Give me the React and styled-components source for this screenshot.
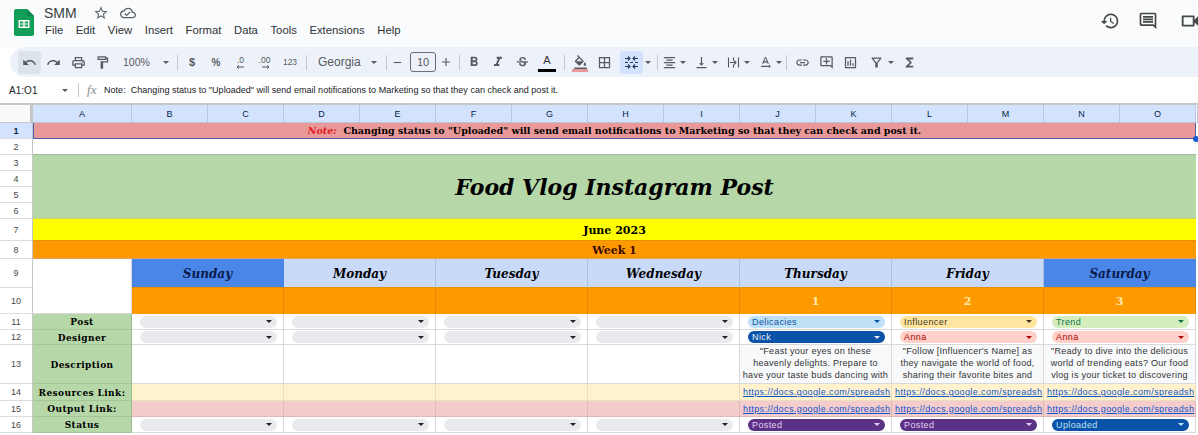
import React from "react";
import styled, { createGlobalStyle } from "styled-components";
import {
  MdAdd, MdBorderAll, MdFormatAlignCenter, MdFormatBold, MdFormatItalic, MdFunctions, MdHistory, MdLink,
  MdOutlineAddComment, MdOutlineCloudDone, MdOutlineComment, MdOutlineFilterAlt, MdOutlineFormatColorFill,
  MdOutlineFormatPaint, MdOutlineInsertChart, MdOutlinePrint, MdOutlineVideocam, MdRedo, MdRemove, MdStarBorder,
  MdStrikethroughS, MdTextRotationNone, MdUndo, MdVerticalAlignBottom,
} from "react-icons/md";

const GlobalStyle = createGlobalStyle`
  html, body { margin: 0; padding: 0; background: #fff; overflow: hidden; }
  body { font-family: "Liberation Sans", Arial, sans-serif; }
`;

const Page = styled.div`
  width: 1198px;
  height: 435px;
  overflow: hidden;
  display: flex;
  flex-direction: column;
  background: #fff;
  position: relative;
`;

const TitleBar = styled.div`
  height: 47px;
  background: #f9fbfd;
  display: flex;
  align-items: flex-start;
  flex-shrink: 0;
`;

const Logo = styled.svg`
  width: 20px;
  height: 27px;
  margin: 9px 0 0 14px;
`;

const TitleBlock = styled.div`
  margin-left: 10px;
  display: flex;
  flex-direction: column;
`;

const TitleLine = styled.div`
  display: flex;
  align-items: center;
  height: 24px;
  padding-top: 2px;
  box-sizing: border-box;
  color: #3c4043;
  font-size: 14px;
  svg { color: #5f6368; }
  svg + svg { margin-left: 11px; }
`;

const DocName = styled.span`
  width: 49px;
`;

const MenuLine = styled.div`
  display: flex;
  gap: 12.6px;
  font-size: 11.3px;
  color: #303336;
  padding-left: 1px;
`;

const TopIcons = styled.div`
  margin-left: auto;
  display: flex;
  align-items: center;
  gap: 18px;
  padding-top: 10px;
  margin-right: -3px;
  color: #444746;
  svg { flex-shrink: 0; }
  svg + svg + svg { margin-left: 3px; }
`;

const Toolbar = styled.div`
  height: 30px;
  margin-left: 10px;
  background: #edf2fa;
  border-radius: 15px 0 0 15px;
  display: flex;
  align-items: center;
  padding-left: 8px;
  color: #565a5e;
  font-size: 11px;
  flex-shrink: 0;
`;

const Tool = styled.div`
  width: ${(p) => p.$w || 24}px;
  height: 23px;
  flex-shrink: 0;
  display: flex;
  align-items: center;
  justify-content: ${(p) => (p.$pad ? "flex-start" : "center")};
  padding-left: ${(p) => p.$pad || 0}px;
  margin-left: ${(p) => p.$ml || 0}px;
  box-sizing: border-box;
  border-radius: 3px;
  background: ${(p) => p.$on || "transparent"};
  font-size: ${(p) => p.$fs || 11}px;
  font-weight: ${(p) => (p.$bold ? 700 : 400)};
  position: relative;
`;

const Sep = styled.div`
  width: 1px;
  height: 15px;
  background: #c7c7c7;
  margin: 0 ${(p) => p.$r || 0}px 0 ${(p) => p.$l || 0}px;
  flex-shrink: 0;
`;

const Caret = styled.span`
  width: 0;
  height: 0;
  flex-shrink: 0;
  border-left: 3px solid transparent;
  border-right: 3px solid transparent;
  border-top: 3px solid #565a5e;
  margin-left: ${(p) => p.$m || 0}px;
  margin-right: ${(p) => p.$mr || 0}px;
`;

const SizeBox = styled.div`
  width: 26px;
  height: 20px;
  border: 1px solid #6b6f73;
  border-radius: 3px;
  box-sizing: border-box;
  display: flex;
  align-items: center;
  justify-content: center;
  font-size: 11px;
  flex-shrink: 0;
`;

const ColorBar = styled.span`
  position: absolute;
  left: 4px;
  right: 4px;
  bottom: 2px;
  height: 3px;
  background: ${(p) => p.$c};
`;

const TextColor = styled.span`
  font-size: 11px;
  margin-top: -5px;
  color: #333;
`;

const Decimal = styled.div`
  display: flex;
  flex-direction: column;
  align-items: flex-end;
  font-size: 8.5px;
  line-height: 8px;
  svg { display: block; margin-top: 1px; }
`;

const FormulaBar = styled.div`
  height: 28px;
  box-sizing: border-box;
  display: flex;
  align-items: center;
  font-size: 9px;
  letter-spacing: 0.03px;
  white-space: pre;
  color: #202124;
  border-bottom: 2px solid #c4c7c5;
  flex-shrink: 0;
`;

const NameBox = styled.div`
  width: 53px;
  padding-left: 9px;
  font-size: 10px;
`;

const FormulaDivider = styled.div`
  width: 1px;
  height: 14px;
  background: #c4c7c5;
  margin: 0 8px 0 10px;
`;

const Fx = styled.span`
  font-family: "Liberation Serif", serif;
  font-style: italic;
  color: #8a8f94;
  font-size: 13px;
  width: 17px;
`;

const Sheet = styled.div`
  display: grid;
  grid-template-columns: 33px 99px repeat(14, 76px) 2px;
  grid-template-rows: 18px repeat(6, 16px) 22px 18px 29px 26px 16px 15px 39px 17px 16px 16px;
  width: 1198px;
  flex-shrink: 0;
  font-family: "DejaVu Serif", Georgia, serif;
  font-size: 9px;
  color: #000;
`;

const Corner = styled.div`
  background: #f8f9fa;
  border-right: 3px solid #c4c7c5;
  border-bottom: 1px solid #c4c7c5;
  box-sizing: border-box;
`;

const ColHead = styled.div`
  background: ${(p) => (p.$blank ? "#fff" : "#d3e3fd")};
  border-right: 1px solid #b9c7de;
  border-bottom: 1px solid #b9c7de;
  box-sizing: border-box;
  font-family: "Liberation Sans", sans-serif;
  font-size: 9px;
  color: #041e49;
  display: flex;
  align-items: center;
  justify-content: center;
`;

const RowHead = styled.div`
  grid-column: 1;
  grid-row: ${(p) => p.$r};
  border-right: 1px solid #c4c7c5;
  border-bottom: 1px solid #dadce0;
  box-sizing: border-box;
  font-family: "Liberation Sans", sans-serif;
  font-size: 9px;
  color: ${(p) => (p.$on ? "#041e49" : "#444746")};
  font-weight: ${(p) => (p.$on ? 700 : 400)};
  background: ${(p) => (p.$on ? "#d3e3fd" : "#fff")};
  display: flex;
  align-items: center;
  justify-content: center;
`;

const Banner = styled.div`
  grid-column: 2 / 17;
  grid-row: ${(p) => p.$row};
  background: ${(p) => p.$bg};
  color: ${(p) => p.$color || "#000"};
  font-size: ${(p) => p.$size}px;
  font-weight: 700;
  font-style: ${(p) => (p.$italic ? "italic" : "normal")};
  box-sizing: border-box;
  padding-top: 1px;
  border-bottom: 1px solid ${(p) => p.$line || "#d9d9d9"};
  display: flex;
  align-items: center;
  justify-content: center;
  white-space: pre;
`;

const SelectedBanner = styled(Banner)`
  border: 1px solid #4a5fb0;
  border-top: none;
  padding-top: 0;
`;

const NoteLabel = styled.span`
  color: #e01b1b;
  font-style: italic;
`;

const SelectionDot = styled.div`
  position: absolute;
  left: 1193px;
  top: 136px;
  width: 6px;
  height: 6px;
  border-radius: 50%;
  background: #1a5fd0;
`;

const DayHead = styled.div`
  grid-column: span 2;
  background: ${(p) => (p.$weekend ? "#4a86e8" : "#c9daf8")};
  border-right: 1px solid ${(p) => (p.$weekend ? "#4a86e8" : "#aebfdc")};
  border-bottom: 1px solid #e69100;
  box-sizing: border-box;
  padding-top: 1px;
  font-size: 12px;
  font-weight: 700;
  font-style: italic;
  display: flex;
  align-items: center;
  justify-content: center;
  color: ${(p) => (p.$weekend ? "#0b1a4a" : "#000")};
`;

const DateCell = styled.div`
  grid-column: span 2;
  background: #ff9900;
  border-right: 1px solid #e08a00;
  box-sizing: border-box;
  color: #ffe9a8;
  font-size: 11px;
  font-weight: 700;
  display: flex;
  align-items: center;
  justify-content: center;
`;

const Label = styled.div`
  grid-column: 2;
  background: #b6d7a8;
  border-bottom: 1px solid #a4c496;
  border-right: 1px solid #9dbd90;
  box-sizing: border-box;
  padding-top: 1px;
  font-size: 9px;
  font-weight: 700;
  letter-spacing: 0.4px;
  display: flex;
  align-items: center;
  justify-content: center;
  white-space: nowrap;
`;

const Cell = styled.div`
  grid-column: span 2;
  background: ${(p) => p.$bg || "#fff"};
  border-right: 1px solid ${(p) => p.$line || "#d9d9d9"};
  border-bottom: 1px solid ${(p) => p.$line || "#d9d9d9"};
  box-sizing: border-box;
  display: flex;
  align-items: center;
  overflow: hidden;
  min-width: 0;
`;

const ChipCell = styled(Cell)`
  padding-left: 8px;
`;

const Chip = styled.div`
  width: 137px;
  height: 12px;
  border-radius: 6px;
  background: ${(p) => p.$bg || "#e8eaed"};
  color: ${(p) => p.$fg || "#000"};
  font-family: "Liberation Sans", sans-serif;
  font-size: 9px;
  letter-spacing: 0.4px;
  display: flex;
  align-items: center;
  padding: 0 5px 0 4px;
  box-sizing: border-box;
  &::after {
    content: "";
    margin-left: auto;
    border-left: 3px solid transparent;
    border-right: 3px solid transparent;
    border-top: 3px solid ${(p) => p.$arrow || "#202124"};
  }
`;

const Desc = styled.div`
  font-family: "Liberation Sans", sans-serif;
  font-size: 9px;
  letter-spacing: 0.28px;
  line-height: 12px;
  color: #333;
  text-align: center;
  white-space: pre;
  overflow: hidden;
  height: 38px;
  width: 100%;
  background: #f8f9fb;
`;

const UrlCell = styled(Cell)`
  padding-left: 3px;
`;

const Url = styled.span`
  font-family: "Liberation Sans", sans-serif;
  font-size: 9px;
  letter-spacing: 0.4px;
  color: #1155cc;
  text-decoration: underline;
  white-space: nowrap;
`;

const SpacerCell = styled.div`
  grid-column: 2;
  grid-row: ${(p) => p.$row};
  background: #fff;
  border-right: 1px solid #d9d9d9;
  border-bottom: 1px solid #d9d9d9;
  box-sizing: border-box;
`;

const columns = ["A", "B", "C", "D", "E", "F", "G", "H", "I", "J", "K", "L", "M", "N", "O"];
const days = ["Sunday", "Monday", "Tuesday", "Wednesday", "Thursday", "Friday", "Saturday"];
const url = "https://docs.google.com/spreadsh";

const posts = [null, null, null, null,
  { text: "Delicacies", bg: "#bfe1f6", fg: "#0a53a8", arrow: "#0a53a8" },
  { text: "Influencer", bg: "#ffe5a0", fg: "#473821", arrow: "#473821" },
  { text: "Trend", bg: "#d4edbc", fg: "#11734b", arrow: "#11734b" }];
const designers = [null, null, null, null,
  { text: "Nick", bg: "#0a53a8", fg: "#e6f0fa", arrow: "#e6f0fa" },
  { text: "Anna", bg: "#ffcfc9", fg: "#b10202", arrow: "#b10202" },
  { text: "Anna", bg: "#ffcfc9", fg: "#b10202", arrow: "#b10202" }];
const statuses = [null, null, null, null,
  { text: "Posted", bg: "#5a3286", fg: "#e5cff2", arrow: "#e5cff2" },
  { text: "Posted", bg: "#5a3286", fg: "#e5cff2", arrow: "#e5cff2" },
  { text: "Uploaded", bg: "#0a53a8", fg: "#bfe1f6", arrow: "#bfe1f6" }];
const descriptions = [null, null, null, null,
  `"Feast your eyes on these\nheavenly delights. Prepare to\nhave your taste buds dancing with`,
  `"Follow [Influencer's Name] as\nthey navigate the world of food,\nsharing their favorite bites and`,
  `"Ready to dive into the delicious\nworld of trending eats? Our food\nvlog is your ticket to discovering`];
const dates = ["", "", "", "", "1", "2", "3"];

const ChipRow = ({ items }) =>
  items.map((item, i) => (
    <ChipCell key={i}>
      {item ? <Chip $bg={item.bg} $fg={item.fg} $arrow={item.arrow}>{item.text}</Chip> : <Chip />}
    </ChipCell>
  ));

const UrlRow = ({ bg, line }) =>
  days.map((d, i) => (
    <UrlCell key={d} $bg={bg} $line={line}>
      {i >= 4 && <Url>{url}</Url>}
    </UrlCell>
  ));

const SheetsLogo = () => (
  <Logo viewBox="0 0 20 27">
    <path d="M2 0h11l7 7v18a2 2 0 0 1-2 2H2a2 2 0 0 1-2-2V2a2 2 0 0 1 2-2z" fill="#0f9d58" />
    <path d="M13 0l7 7h-7z" fill="#0b8a4c" />
    <path d="M4.5 11h11v8h-11z M5.9 12.4v2h3.4v-2z M10.7 12.4v2h3.4v-2z M5.9 15.6v2h3.4v-2z M10.7 15.6v2h3.4v-2z" fill="#fff" fillRule="evenodd" />
  </Logo>
);

const MergeIcon = () => (
  <svg width="15" height="15" viewBox="0 0 15 15" fill="none" stroke="#1f3b63" strokeWidth="1.1">
    <path d="M1 3.500h4.500M4 1.500l2 2-2 2M14 3.500H9.500M11 1.500l-2 2 2 2" />
    <path d="M1 11.500h4.500M4 9.500l2 2-2 2M14 11.500H9.500M11 9.500l-2 2 2 2" />
    <path d="M1 7.500h3M6 7.500h3M11 7.500h3" />
  </svg>
);

const OverflowIcon = () => (
  <svg width="13" height="13" viewBox="0 0 13 13" fill="none" stroke="#565a5e" strokeWidth="1.100">
    <path d="M1.500 1.500v10M11.500 1.500v10M6.500 1.500v3M6.500 8.500v3M3 6.500h6M7 4.500l2 2-2 2" />
  </svg>
);

const ArrowLeft = () => (
  <svg width="8" height="4" viewBox="0 0 8 4" fill="none" stroke="#565a5e" strokeWidth="1">
    <path d="M8 2H1M3 0.300L1 2l2 1.700" />
  </svg>
);

const ArrowRight = () => (
  <svg width="8" height="4" viewBox="0 0 8 4" fill="none" stroke="#565a5e" strokeWidth="1">
    <path d="M0 2h7M5 0.300L7 2 5 3.700" />
  </svg>
);

const ICON = 15;

export default function App() {
  return (
    <Page>
      <GlobalStyle />
      <TitleBar>
        <SheetsLogo />
        <TitleBlock>
          <TitleLine>
            <DocName>SMM</DocName>
            <MdStarBorder size={16} />
            <MdOutlineCloudDone size={16} />
          </TitleLine>
          <MenuLine>
            {["File", "Edit", "View", "Insert", "Format", "Data", "Tools", "Extensions", "Help"].map((m) => (
              <span key={m}>{m}</span>
            ))}
          </MenuLine>
        </TitleBlock>
        <TopIcons>
          <MdHistory size={20} />
          <MdOutlineComment size={20} />
          <MdOutlineVideocam size={22} />
        </TopIcons>
      </TitleBar>

      <Toolbar>
        <Tool $w={23} $on="#dde3ea"><MdUndo size={ICON} /></Tool>
        <Tool $w={25}><MdRedo size={ICON} /></Tool>
        <Tool><MdOutlinePrint size={ICON} /></Tool>
        <Tool><MdOutlineFormatPaint size={ICON} /></Tool>
        <Tool $w={58} $pad={9} $fs={10.5}>100%<Caret $m={13} /></Tool>
        <Sep $l={5} $r={2} />
        <Tool $bold>$</Tool>
        <Tool $bold $fs={10}>%</Tool>
        <Tool><Decimal>.0<ArrowLeft /></Decimal></Tool>
        <Tool $w={25}><Decimal>.00<ArrowRight /></Decimal></Tool>
        <Tool $fs={8.5} $ml={1}>123</Tool>
        <Sep $l={4} />
        <Tool $w={74} $pad={11} $fs={12}>Georgia<Caret $m={10} /></Tool>
        <Sep $l={5} />
        <Tool $w={21}><MdRemove size={13} /></Tool>
        <Tool $w={2} />
        <SizeBox>10</SizeBox>
        <Tool $w={20}><MdAdd size={14} /></Tool>
        <Sep $l={3} $r={2} />
        <Tool><MdFormatBold size={16} /></Tool>
        <Tool><MdFormatItalic size={16} /></Tool>
        <Tool><MdStrikethroughS size={ICON} /></Tool>
        <Tool $w={26}><TextColor>A</TextColor><ColorBar $c="#000" /></Tool>
        <Sep $l={4} $r={3} />
        <Tool><MdOutlineFormatColorFill size={ICON} /><ColorBar $c="#e69999" /></Tool>
        <Tool><MdBorderAll size={ICON} /></Tool>
        <Tool $w={23} $ml={4} $on="#d3e3fd"><MergeIcon /></Tool>
        <Caret $m={2} $mr={3} />
        <Sep $l={3} />
        <Tool $w={22}><MdFormatAlignCenter size={ICON} /></Tool><Caret $mr={4} />
        <Tool $w={22}><MdVerticalAlignBottom size={ICON} /></Tool><Caret $mr={4} />
        <Tool $w={22}><OverflowIcon /></Tool><Caret $mr={4} />
        <Tool $w={22}><MdTextRotationNone size={ICON} /></Tool><Caret $mr={4} />
        <Sep $r={3} />
        <Tool><MdLink size={ICON} /></Tool>
        <Tool><MdOutlineAddComment size={ICON} /></Tool>
        <Tool><MdOutlineInsertChart size={ICON} /></Tool>
        <Tool $ml={2}><MdOutlineFilterAlt size={ICON} /></Tool>
        <Caret $mr={3} />
        <Tool><MdFunctions size={ICON} /></Tool>
      </Toolbar>

      <FormulaBar>
        <NameBox>A1:O1</NameBox>
        <Caret />
        <FormulaDivider />
        <Fx>fx</Fx>
        {'Note:  Changing status to "Uploaded" will send email notifications to Marketing so that they can check and post it.'}
      </FormulaBar>

      <Sheet>
        <Corner />
        {columns.map((c) => <ColHead key={c}>{c}</ColHead>)}
        <ColHead $blank />

        {Array.from({ length: 16 }, (_, i) => (
          <RowHead key={i} $r={i + 2} $on={i === 0}>{i + 1}</RowHead>
        ))}

        <SelectedBanner $row="2" $bg="#ea9999" $size={9.5}>
          <NoteLabel>Note:</NoteLabel>{"  Changing status to \"Uploaded\" will send email notifications to Marketing so that they can check and post it."}
        </SelectedBanner>
        <Banner $row="3" $bg="#fff" $size={9} $line="#a9b8a2" />
        <Banner $row="4 / 8" $bg="#b6d7a8" $size={22} $italic $line="#c9cf7a">Food Vlog Instagram Post</Banner>
        <Banner $row="8" $bg="#ffff00" $size={11} $line="#e69100">June 2023</Banner>
        <Banner $row="9" $bg="#ff9900" $size={11} $color="#3d0a00" $line="#e0a060">Week 1</Banner>

        <SpacerCell $row="10 / 12" />
        {days.map((d, i) => (
          <DayHead key={d} $weekend={i === 0 || i === 6}>{d}</DayHead>
        ))}
        {dates.map((d, i) => <DateCell key={i}>{d}</DateCell>)}

        <Label>Post</Label>
        <ChipRow items={posts} />
        <Label>Designer</Label>
        <ChipRow items={designers} />
        <Label>Description</Label>
        {descriptions.map((d, i) => (
          <Cell key={i}>{d && <Desc>{d}</Desc>}</Cell>
        ))}
        <Label>Resources Link:</Label>
        <UrlRow bg="#fff2cc" line="#ecdcc0" />
        <Label>Output Link:</Label>
        <UrlRow bg="#f4cccc" line="#e0b8b8" />
        <Label>Status</Label>
        <ChipRow items={statuses} />
      </Sheet>
      <SelectionDot />
    </Page>
  );
}
